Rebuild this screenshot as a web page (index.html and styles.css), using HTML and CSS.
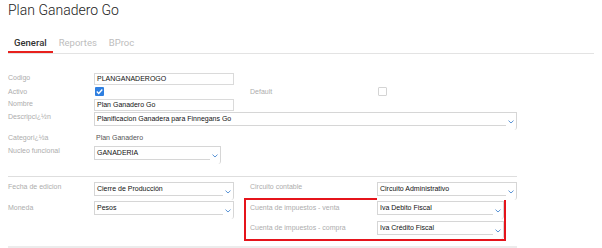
FILE: index.html
```html
<!DOCTYPE html>
<html>
<head>
<meta charset="utf-8">
<link rel="stylesheet" href="styles.css">
</head>
<body>
<div class="page">
  <h1 class="title">Plan Ganadero Go</h1>
  <div class="tabs">
    <span class="tab active">General</span>
    <span class="tab">Reportes</span>
    <span class="tab">BProc</span>
  </div>

  <div class="sec1">
    <div class="row r-codigo">
      <span class="lbl">Codigo</span>
      <div class="inp">PLANGANADEROGO</div>
    </div>
    <div class="row r-activo">
      <span class="lbl">Activo</span>
      <div class="ctl"><span class="chk on"><svg width="9" height="9" viewBox="0 0 9 9"><path d="M1.8 4.6 L3.7 6.4 L7.3 2.6" fill="none" stroke="#fff" stroke-width="1.4"/></svg></span></div>
      <span class="lbl c4">Default</span>
      <div class="ctl c5"><span class="chk"></span></div>
    </div>
    <div class="row r-nombre">
      <span class="lbl">Nombre</span>
      <div class="inp">Plan Ganadero Go</div>
    </div>
    <div class="row r-desc">
      <span class="lbl">Descripci¿½n</span>
      <div class="sel wide">
        <div class="val">Planificacion Ganadera para Finnegans Go</div>
        <div class="chev"><svg width="6" height="4" viewBox="0 0 6 4"><path d="M0.5 0.6 L3 3 L5.5 0.6" fill="none" stroke="#5b95d6" stroke-width="1"/></svg></div>
      </div>
    </div>
    <div class="row r-cat">
      <span class="lbl">Categori¿½a</span>
      <span class="txt">Plan Ganadero</span>
    </div>
    <div class="row r-nucleo">
      <span class="lbl">Nucleo funcional</span>
      <div class="sel short">
        <div class="val">GANADERIA</div>
        <div class="chev"><svg width="6" height="4" viewBox="0 0 6 4"><path d="M0.5 0.6 L3 3 L5.5 0.6" fill="none" stroke="#5b95d6" stroke-width="1"/></svg></div>
      </div>
    </div>
  </div>

  <div class="sep"></div>

  <div class="sec2">
    <div class="col-left">
      <div class="row2">
        <span class="lbl">Fecha de edicion</span>
        <div class="sel">
          <div class="val">Cierre de Producción</div>
          <div class="chev"><svg width="6" height="4" viewBox="0 0 6 4"><path d="M0.5 0.6 L3 3 L5.5 0.6" fill="none" stroke="#5b95d6" stroke-width="1"/></svg></div>
        </div>
      </div>
      <div class="row2 gap1">
        <span class="lbl low">Moneda</span>
        <div class="sel">
          <div class="val">Pesos</div>
          <div class="chev"><svg width="6" height="4" viewBox="0 0 6 4"><path d="M0.5 0.6 L3 3 L5.5 0.6" fill="none" stroke="#5b95d6" stroke-width="1"/></svg></div>
        </div>
      </div>
    </div>
    <div class="col-right">
      <div class="row3">
        <span class="lbl">Circuito contable</span>
        <div class="sel">
          <div class="val">Circuito Administrativo</div>
          <div class="chev"><svg width="6" height="4" viewBox="0 0 6 4"><path d="M0.5 0.6 L3 3 L5.5 0.6" fill="none" stroke="#5b95d6" stroke-width="1"/></svg></div>
        </div>
      </div>
      <div class="hl">
        <div class="row4">
          <span class="lbl low">Cuenta de impuestos - venta</span>
          <div class="sel">
            <div class="val">Iva Debito Fiscal</div>
            <div class="chev"><svg width="6" height="4" viewBox="0 0 6 4"><path d="M0.5 0.6 L3 3 L5.5 0.6" fill="none" stroke="#5b95d6" stroke-width="1"/></svg></div>
          </div>
        </div>
        <div class="row4 gap2">
          <span class="lbl low">Cuenta de impuestos - compra</span>
          <div class="sel">
            <div class="val">Iva Crédito Fiscal</div>
            <div class="chev"><svg width="6" height="4" viewBox="0 0 6 4"><path d="M0.5 0.6 L3 3 L5.5 0.6" fill="none" stroke="#5b95d6" stroke-width="1"/></svg></div>
          </div>
        </div>
      </div>
    </div>
  </div>

  <div class="sep bottom"></div>
</div>
</body>
</html>
```

FILE: styles.css
```css
* { box-sizing: border-box; }
html, body { margin: 0; padding: 0; background: #fff; }
body { font-family: "Liberation Sans", Arial, sans-serif; }

.page { padding: 0 8px; width: 602px; }

.title {
  margin: 2px 0 0 0;
  font-family: Roboto, "Liberation Sans", sans-serif;
  font-weight: 300;
  font-size: 14px;
  line-height: 16px;
  color: #222;
}

.tabs {
  margin-top: 19px;
  display: flex;
  border-bottom: 1px solid #e3e3e3;
}
.tab {
  font-family: Roboto, "Liberation Sans", sans-serif;
  font-size: 9.5px;
  line-height: 11px;
  padding: 0 6px 3px 6px;
  border-bottom: 2px solid transparent;
  color: #bdbdbd;
}
.tab.active {
  color: #333;
  font-weight: 500;
  border-bottom-color: #e8211d;
}

.sec1 { margin-top: 19px; }

.row {
  display: grid;
  grid-template-columns: 86px 140px 16px 127px 140px;
  align-items: start;
}
.c4 { grid-column: 4; }
.c5 { grid-column: 5; }

.lbl {
  font-size: 7px;
  line-height: 10px;
  color: #adadad;
  white-space: nowrap;
}
.lbl.low { padding-top: 2px; }

.r-activo { margin-top: 2px; }
.r-nombre { margin-top: 2px; }
.r-desc { margin-top: 1px; }
.r-cat { margin-top: 3px; }
.r-nucleo { margin-top: 3px; }

.inp {
  height: 12px;
  border: 1px solid #dadada;
  font-size: 7px;
  line-height: 10px;
  padding-left: 2px;
  color: #111;
  white-space: nowrap;
}

.ctl { height: 10px; display: flex; align-items: flex-start; }
.chk {
  width: 9px;
  height: 9px;
  margin-left: 1px;
  border: 1px solid #d4d4d4;
  border-radius: 1px;
  background: #fff;
  display: block;
}
.chk.on {
  border: none;
  background: #2f7fe0;
}
.chk svg { display: block; }

.txt {
  font-size: 7px;
  line-height: 10px;
  color: #555;
  padding-left: 2px;
}

.sel {
  display: flex;
  height: 18px;
  border-top: 1px solid #d6d6d6;
  border-right: 1px solid #d6d6d6;
  border-bottom-right-radius: 3px;
  background: #fff;
}
.sel .val {
  flex: 1;
  height: 13px;
  border-left: 1px solid #d6d6d6;
  border-bottom: 1px solid #d6d6d6;
  font-size: 7px;
  line-height: 11px;
  padding-left: 2px;
  color: #111;
  white-space: nowrap;
  overflow: hidden;
}
.sel .chev {
  width: 10px;
  padding: 7px 0 0 2px;
}
.sel .chev svg { display: block; }
.sel.wide { grid-column: 2 / 6; }
.sel.short { width: 127px; }

.sep {
  margin-top: 12px;
  width: 509px;
  height: 1px;
  background: #dedede;
}
.sep.bottom {
  margin-top: 5px;
  height: 2px;
  background: #ececec;
}

.sec2 {
  margin-top: 5px;
  display: flex;
}
.col-left { width: 242px; }
.col-right { width: 267px; }

.row2 {
  display: grid;
  grid-template-columns: 86px 140px;
}
.row2.gap1 { margin-top: 1px; }

.row3 {
  display: grid;
  grid-template-columns: 127px 140px;
}

.hl {
  margin: -2px 0 0 -6px;
  width: 262px;
  border: 2px solid #e5141b;
  padding: 1px 0 0 4px;
}
.row4 {
  display: grid;
  grid-template-columns: 127px 127px;
}
.row4.gap2 { margin-top: 2px; }
```
